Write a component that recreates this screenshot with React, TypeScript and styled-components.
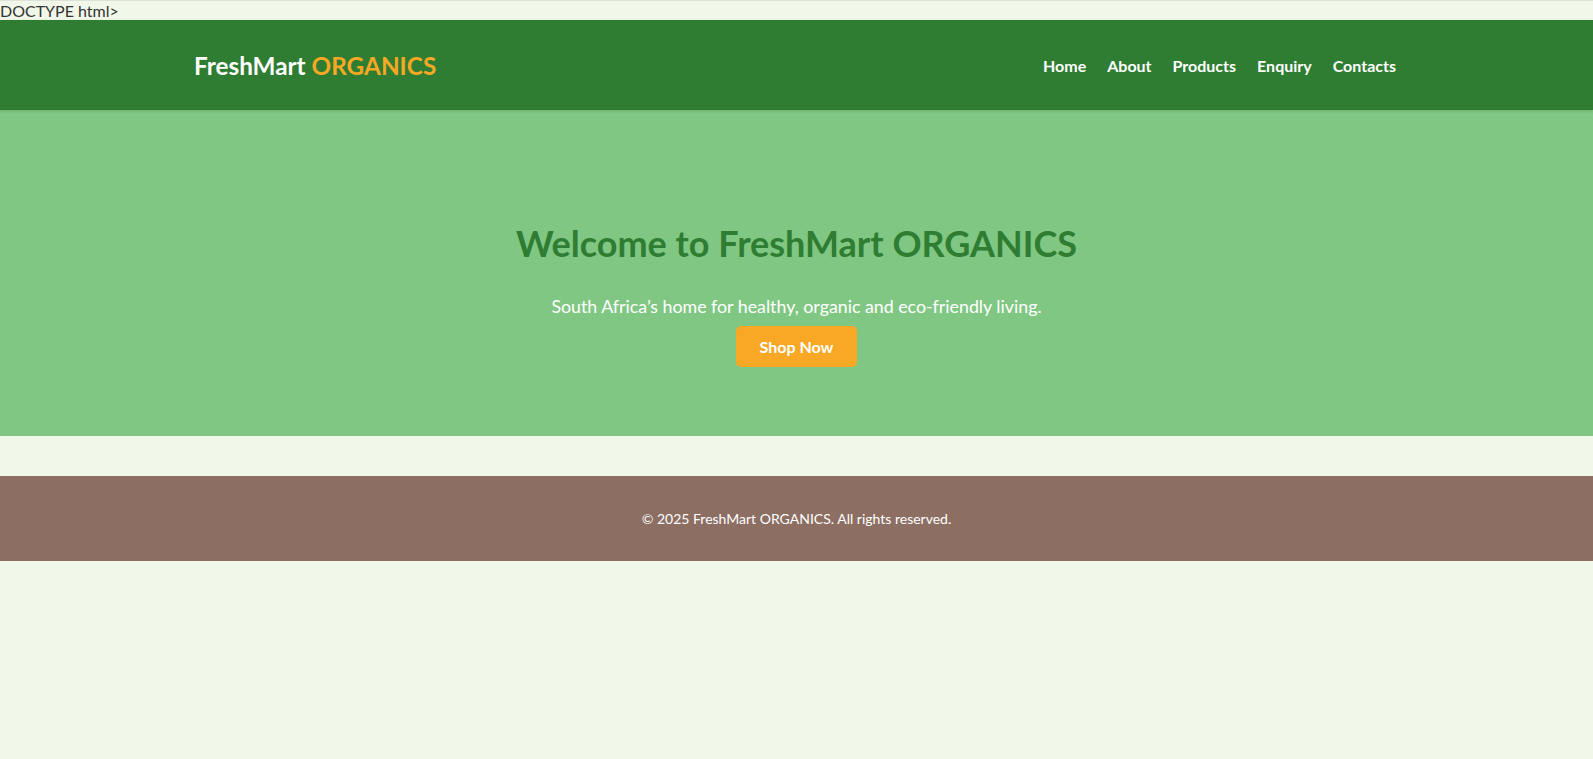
import React from "react";
import styled, { createGlobalStyle } from "styled-components";

const GlobalStyle = createGlobalStyle`
  html, body {
    margin: 0;
    padding: 0;
  }
  body {
    background: #f1f8e9;
    color: #333;
    font-family: Lato, "Open Sans", "Liberation Sans", sans-serif;
    border-top: 1px solid #dde3d8;
    min-height: 758px;
  }
`;

const Stray = styled.div`
  font-size: 16px;
  line-height: 19px;
  height: 19px;
  color: #333;
`;

const Header = styled.header`
  background: #2e7d32;
  height: 90px;
  display: flex;
  justify-content: center;
  padding-right: 3px;
  box-shadow: 0 1px 3px rgba(0, 0, 0, 0.15);
  position: relative;
  z-index: 1;
`;

const HeaderInner = styled.div`
  width: 1202px;
  display: flex;
  align-items: center;
  justify-content: space-between;
`;

const Logo = styled.div`
  font-size: 24.3px;
  font-weight: 700;
  color: #fff;
`;

const Accent = styled.span`
  color: #f9a825;
`;

const Nav = styled.nav`
  display: flex;
  gap: 21px;
`;

const NavLink = styled.a`
  color: #fff;
  font-weight: 700;
  font-size: 16px;
  text-decoration: none;
`;

const Hero = styled.section`
  background: #81c784;
  padding: 112px 20px 69px;
  text-align: center;
`;

const Title = styled.h2`
  margin: 0 0 30px;
  font-size: 36px;
  line-height: 43px;
  font-weight: 700;
  color: #2e7d32;
`;

const Lead = styled.p`
  margin: 0 0 9px;
  font-size: 17.8px;
  line-height: 22px;
  color: #fff;
`;

const Button = styled.a`
  display: inline-block;
  background: #f9a825;
  color: #fff;
  font-weight: 700;
  font-size: 16px;
  line-height: 19px;
  padding: 11px 24px;
  border-radius: 5px;
  text-decoration: none;
`;

const Footer = styled.footer`
  margin-top: 40px;
  background: #8d6e63;
  color: #fff;
  text-align: center;
  padding: 34px 0;
  font-size: 14px;
  line-height: 17px;
`;

export default function App() {
  return (
    <>
      <GlobalStyle />
      <Stray>DOCTYPE html&gt;</Stray>
      <Header>
        <HeaderInner>
          <Logo>
            FreshMart <Accent>ORGANICS</Accent>
          </Logo>
          <Nav>
            <NavLink href="#">Home</NavLink>
            <NavLink href="#">About</NavLink>
            <NavLink href="#">Products</NavLink>
            <NavLink href="#">Enquiry</NavLink>
            <NavLink href="#">Contacts</NavLink>
          </Nav>
        </HeaderInner>
      </Header>
      <Hero>
        <Title>Welcome to FreshMart ORGANICS</Title>
        <Lead>South Africa’s home for healthy, organic and eco-friendly living.</Lead>
        <Button href="#">Shop Now</Button>
      </Hero>
      <Footer>© 2025 FreshMart ORGANICS. All rights reserved.</Footer>
    </>
  );
}
